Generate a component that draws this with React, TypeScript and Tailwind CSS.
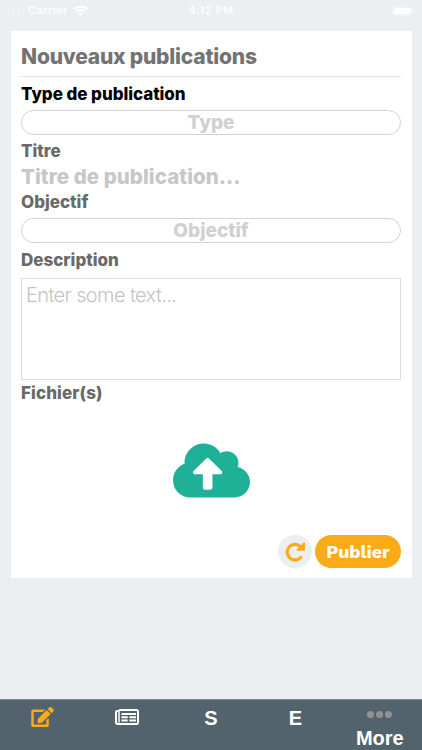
import type { ReactNode } from 'react';
import { FaCloudUploadAlt, FaEdit } from 'react-icons/fa';

function StatusBar() {
    return (
        <header className="h-[31px] shrink-0 grid grid-cols-3 items-start px-[7px] pt-[3px] text-[11px] leading-[15px] font-medium text-white">
            <div className="flex items-center h-[15px]">
                <div className="flex gap-[2px] w-[21px] pt-[7px]">
                    {[0, 1, 2, 3].map((dot) => (
                        <span key={dot} className="w-[3px] h-[2px] rounded-full bg-white/30" />
                    ))}
                </div>
                <span className="tracking-[0.45px]">Carrier</span>
                <svg className="ml-[5px] w-[15px] h-[11px]" viewBox="0 0 15 11" fill="none" stroke="currentColor" strokeWidth="2.2">
                    <path d="M.8 4.2a9.7 9.7 0 0 1 13.4 0M3.3 6.8a6.1 6.1 0 0 1 8.4 0" />
                    <path d="M7.5 10.8 5.3 8.6a3.2 3.2 0 0 1 4.4 0z" fill="currentColor" stroke="none" />
                </svg>
            </div>
            <span className="text-center tracking-[0.5px]">4:12 PM</span>
            <div className="flex items-center justify-end gap-px h-[15px]">
                <div className="w-[21px] h-[10px] p-[1px] rounded-[3px] border border-white/40">
                    <div className="w-full h-full rounded-[1px] bg-white" />
                </div>
                <span className="w-px h-1 rounded-r bg-white/40" />
            </div>
        </header>
    );
}

function RedoIcon() {
    return (
        <svg className="w-5 h-5" viewBox="0 0 20 20" fill="none" aria-hidden="true">
            <path d="M16 5.3A7.8 7.8 0 1 0 15.6 15.6" stroke="currentColor" strokeWidth="3.3" strokeLinecap="round" />
            <path d="M18.6.6a.8.8 0 0 1 1.4.6v6.700a.9.9 0 0 1-.9.9h-6.900a.8.8 0 0 1-.6-1.400z" fill="currentColor" />
        </svg>
    );
}

function NewspaperIcon() {
    return (
        <svg className="w-6 h-4 mt-px" viewBox="0 0 24 16" fill="none" stroke="currentColor" aria-hidden="true">
            <path d="M4 1H21.500Q23 1 23 2.500V13.500Q23 15 21.500 15H2.800Q1 15 1 13V3Q1 2 2 2H4" strokeWidth="2" />
            <path d="M4 1V13.500" strokeWidth="1.500" />
            <path d="M6.500 5H21M6.500 8.300H12.700M14.300 8.300H21M6.500 11.600H12.700M14.300 11.600H21" strokeWidth="2" />
        </svg>
    );
}

function Label({ children, className = '' }: { children: ReactNode; className?: string }) {
    return <div className={`text-[17px] leading-5 font-extrabold ${className}`}>{children}</div>;
}

function Picker({ children }: { children: ReactNode }) {
    return (
        <button className="block w-full h-[25px] rounded-full border border-[#d3d3d3] text-[19px] leading-[23px] font-extrabold text-[#d0d0d0]">
            {children}
        </button>
    );
}

function Tab({ children }: { children: ReactNode }) {
    return <button className="flex flex-col items-center text-xl leading-5 font-bold text-white pt-2">{children}</button>;
}

export default function App() {
    return (
        <div className="w-full h-[750px] flex flex-col overflow-hidden bg-[#ebeff2] font-['Inter','Liberation_Sans',sans-serif]">
            <StatusBar />

            <main className="mx-[10.5px] h-[547px] shrink-0 flex flex-col bg-white px-[10.5px]">
                <h1 className="h-[46px] pt-[11px] border-b border-[#e4e4e4] text-[21px] leading-[30px] font-extrabold tracking-[-0.2px] text-[#737373]">
                    Nouveaux publications
                </h1>

                <Label className="text-black mt-[7px] mb-[6px] tracking-[-0.05px]">Type de publication</Label>
                <Picker>Type</Picker>

                <Label className="text-[#696969] mt-[6px]">Titre</Label>
                <input
                    className="w-full h-[31px] text-[20.5px] font-extrabold tracking-[0.05px] outline-none placeholder:text-[#c7c7c7] placeholder:opacity-100"
                    placeholder="Titre de publication..."
                />

                <Label className="text-[#696969] mb-[6px]">Objectif</Label>
                <Picker>Objectif</Picker>

                <Label className="text-[#696969] mt-[7px] mb-[8px]">Description</Label>
                <textarea
                    className="block w-full h-[102px] shrink-0 resize-none border border-[#dedede] px-[4px] pt-[3px] text-[20px] leading-[26px] font-light tracking-[-0.62px] outline-none placeholder:text-[#c4c4c4] placeholder:opacity-100"
                    placeholder="Enter some text..."
                />

                <Label className="text-[#696969] mt-[3px] tracking-[0.1px]">Fichier(s)</Label>
                <button className="mt-[29px] self-center text-[#1fb197]" aria-label="Ajouter un fichier">
                    <FaCloudUploadAlt className="w-[77px] h-[77px]" />
                </button>

                {/* Actions */}
                <div className="mt-auto mb-[10px] flex justify-end gap-[3px]">
                    <button className="w-[34px] h-[33px] rounded-full bg-[#ebeff2] flex items-center justify-center text-[#fbaa19]" aria-label="Recharger">
                        <RedoIcon />
                    </button>
                    <button className="w-[86px] h-[33px] rounded-full bg-[#fbaa19] font-['Work_Sans','Open_Sans',sans-serif] text-[18px] font-bold text-white">
                        Publier
                    </button>
                </div>
            </main>

            <nav className="mt-auto h-[51px] shrink-0 grid grid-cols-5 bg-[#52636d] border-t border-[#7b888f] font-['Liberation_Sans',sans-serif]">
                <Tab>
                    <FaEdit className="w-[23px] h-5 -mt-px text-[#fbaa19]" />
                </Tab>
                <Tab>
                    <NewspaperIcon />
                </Tab>
                <Tab>S</Tab>
                <Tab>E</Tab>
                <Tab>
                    <span className="flex gap-[2px] pt-[3px] pb-[10px]">
                        {[0, 1, 2].map((dot) => (
                            <i key={dot} className="w-[7px] h-[7px] rounded-full bg-[#929292]" />
                        ))}
                    </span>
                    More
                </Tab>
            </nav>
        </div>
    );
}
